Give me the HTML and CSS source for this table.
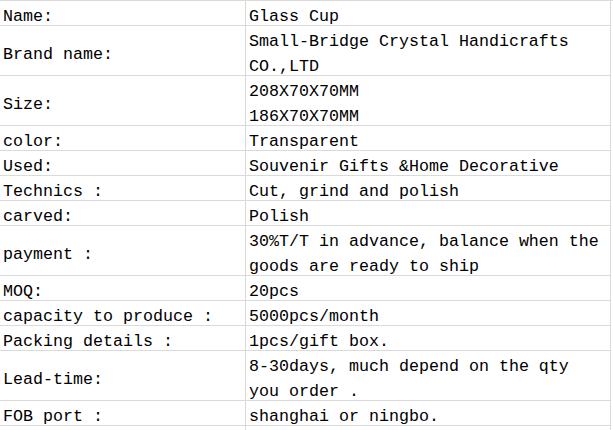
FILE: index.html
```html
<!DOCTYPE html>
<html>
<head>
<meta charset="utf-8">
<link rel="stylesheet" href="styles.css">
</head>
<body>
<div class="sheet">
  <div class="cell"><span>Name:</span></div>
  <div class="cell"><span>Glass Cup</span></div>
  <div class="cell tall"><span>Brand name:</span></div>
  <div class="cell tall"><span>Small-Bridge Crystal Handicrafts<br>CO.,LTD</span></div>
  <div class="cell tall"><span>Size:</span></div>
  <div class="cell tall"><span>208X70X70MM<br>186X70X70MM</span></div>
  <div class="cell"><span>color:</span></div>
  <div class="cell"><span>Transparent</span></div>
  <div class="cell"><span>Used:</span></div>
  <div class="cell"><span>Souvenir Gifts &amp;Home Decorative</span></div>
  <div class="cell"><span>Technics :</span></div>
  <div class="cell"><span>Cut, grind and polish</span></div>
  <div class="cell"><span>carved:</span></div>
  <div class="cell"><span>Polish</span></div>
  <div class="cell tall"><span>payment :</span></div>
  <div class="cell tall"><span>30%T/T in advance, balance when the<br>goods are ready to ship</span></div>
  <div class="cell"><span>MOQ:</span></div>
  <div class="cell"><span>20pcs</span></div>
  <div class="cell"><span>capacity to produce :</span></div>
  <div class="cell"><span>5000pcs/month</span></div>
  <div class="cell"><span>Packing details :</span></div>
  <div class="cell"><span>1pcs/gift box.</span></div>
  <div class="cell tall"><span>Lead-time:</span></div>
  <div class="cell tall"><span>8-30days, much depend on the qty<br>you order .</span></div>
  <div class="cell"><span>FOB port :</span></div>
  <div class="cell"><span>shanghai or ningbo.</span></div>
  <div class="cell"><span></span></div>
  <div class="cell"><span></span></div>
</div>
</body>
</html>
```
FILE: styles.css
```css
html, body {
  margin: 0;
  padding: 0;
  background: #ffffff;
}

.sheet {
  display: grid;
  grid-template-columns: 246px 365px;
  border-top: 1px solid #dadada;
  font-family: "Liberation Mono", "DejaVu Sans Mono", monospace;
  font-size: 16.67px;
  color: #000000;
}

.cell {
  box-sizing: border-box;
  height: 25px;
  border-right: 1px solid #dadada;
  border-bottom: 1px solid #dadada;
  padding: 7px 0 0 3px;
  display: flex;
  align-items: center;
  line-height: 25px;
  white-space: pre;
}

.cell.tall {
  height: 50px;
}
```
